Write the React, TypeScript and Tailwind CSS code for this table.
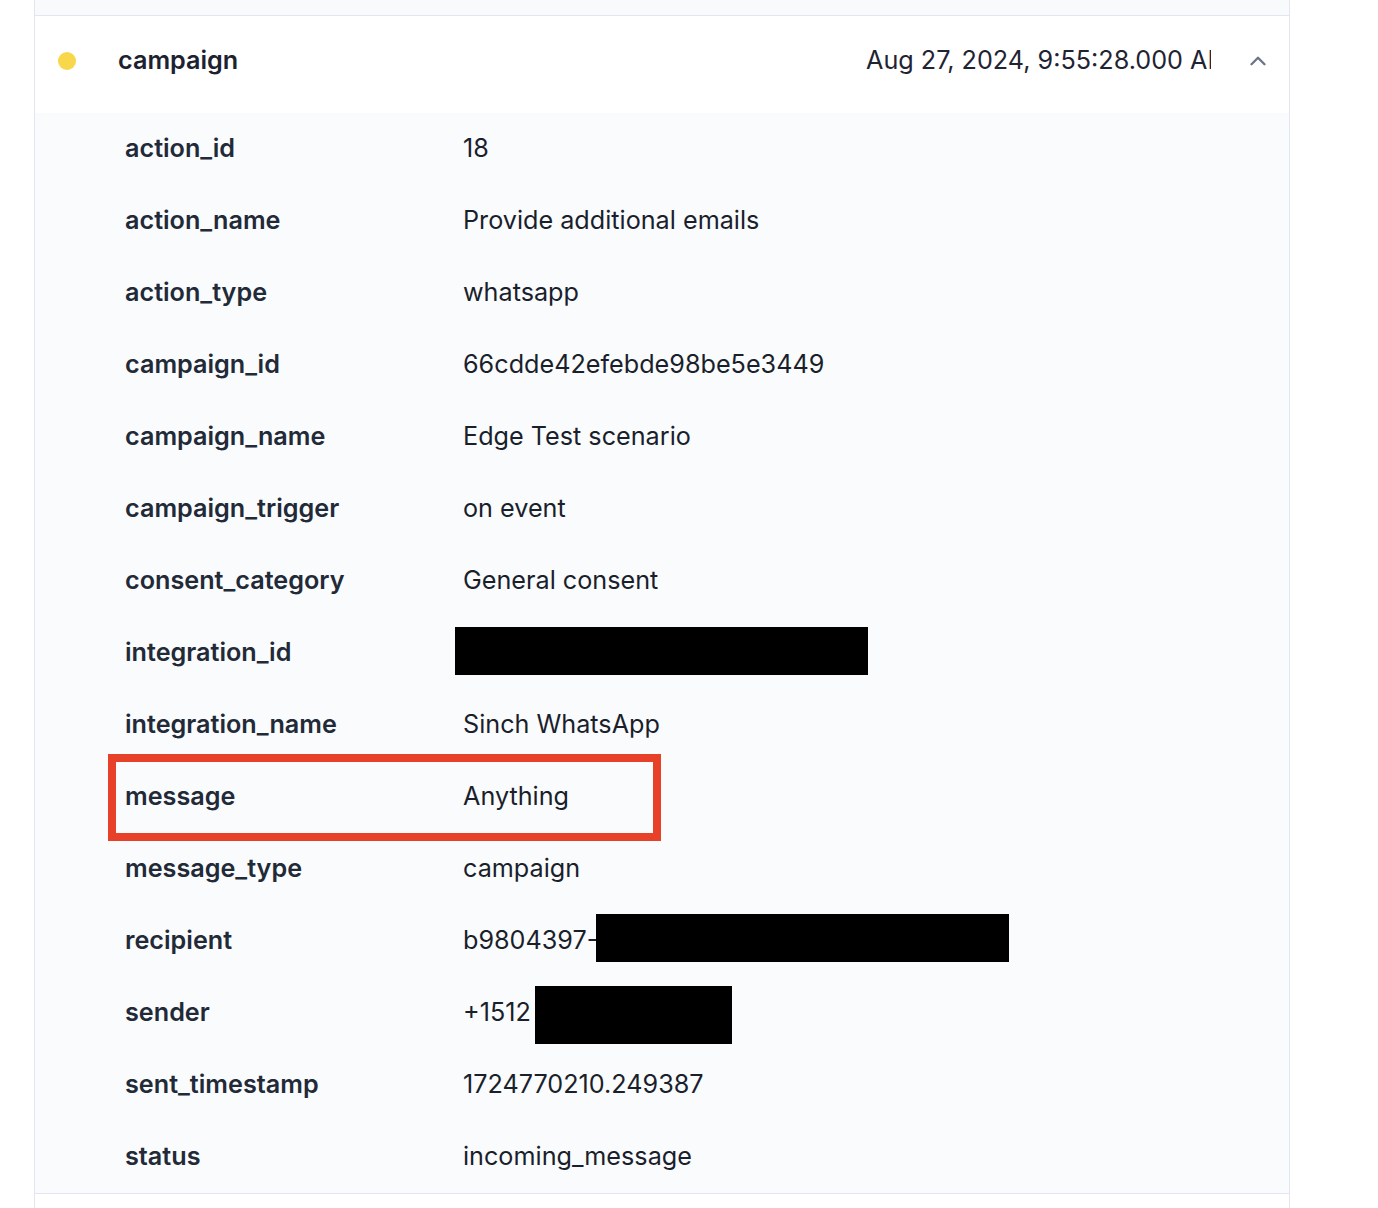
import { ChevronUp } from "lucide-react";
import type { ReactNode } from "react";

type Row = { key: string; value: ReactNode; highlight?: boolean };

const rows: Row[] = [
  { key: "action_id", value: "18" },
  { key: "action_name", value: "Provide additional emails" },
  { key: "action_type", value: "whatsapp" },
  { key: "campaign_id", value: "66cdde42efebde98be5e3449" },
  { key: "campaign_name", value: "Edge Test scenario" },
  { key: "campaign_trigger", value: "on event" },
  { key: "consent_category", value: "General consent" },
  {
    key: "integration_id",
    value: <span className="-ml-[8px] mt-[6px] inline-block h-[48px] w-[413px] bg-black" />,
  },
  { key: "integration_name", value: "Sinch WhatsApp" },
  { key: "message", value: "Anything", highlight: true },
  { key: "message_type", value: "campaign" },
  {
    key: "recipient",
    value: (
      <span className="flex items-center">
        <span>b9804397-</span>
        <span className="-ml-[2px] mt-[-6px] inline-block h-[48px] w-[413px] bg-black" />
      </span>
    ),
  },
  {
    key: "sender",
    value: (
      <span className="flex items-center">
        <span>+1512</span>
        <span className="ml-[4px] mt-[4px] inline-block h-[58px] w-[197px] bg-black" />
      </span>
    ),
  },
  { key: "sent_timestamp", value: "1724770210.249387" },
  { key: "status", value: "incoming_message" },
];

export default function App() {
  return (
    <div className="min-h-screen bg-white font-['Inter',sans-serif] text-[25.2px]">
      <div className="ml-[34px] min-h-[1208px] w-[1256px] border-x border-[#e3e6f0]">
        <div className="h-[16px] border-b border-[#e3e6f0] bg-[#f9fafc]" />

        <div className="flex h-[97px] items-center pb-[7px]">
          <span className="ml-[23px] h-[18px] w-[18px] rounded-full bg-[#f8d74a]" />
          <span className="ml-[42px] font-semibold text-[#1c2230]">campaign</span>
          <span className="ml-auto w-[345px] overflow-hidden whitespace-nowrap text-[#1f2433]">
            Aug 27, 2024, 9:55:28.000 AM
          </span>
          <ChevronUp className="ml-[34px] mr-[18px] text-[#6b7489]" size={26} strokeWidth={2.2} />
        </div>

        <div className="border-b border-[#e3e6f0] bg-[#fafbfd]">
          {rows.map((r) => (
            <div key={r.key} className="relative flex h-[72px] items-center pl-[90px]">
              <span className="w-[338px] font-semibold text-[#222a38]">{r.key}</span>
              <span className="text-[#1a1f2c]">{r.value}</span>
              {r.highlight && (
                <div className="absolute left-[73px] top-[-7px] h-[87px] w-[553px] border-[8px] border-[#e8412a]" />
              )}
            </div>
          ))}
        </div>
      </div>
    </div>
  );
}
